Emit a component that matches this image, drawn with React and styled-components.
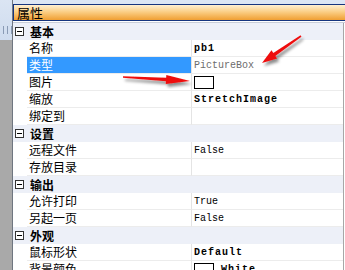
import React from "react";
import styled, { createGlobalStyle } from "styled-components";

const Global = createGlobalStyle`
  html, body {
    margin: 0;
    padding: 0;
    background: #ffffff;
  }
`;

const Page = styled.div`
  position: relative;
  display: flex;
  width: 345px;
  height: 270px;
  overflow: hidden;
  background: #ffffff;
  font-family: "Noto Sans CJK SC", "Noto Sans", sans-serif;
  font-size: 12px;
  color: #000;
`;

const LeftStrip = styled.div`
  position: relative;
  width: 12px;
  flex: none;
  background: linear-gradient(
    to bottom,
    #dbe5f3 0,
    #cfdcef 40px,
    #a9a9a9 40px,
    #a9a9a9 100%
  );
  border-right: 1px solid #6f7680;
`;

const Ticks = styled.div`
  margin-top: 26px;
  height: 8px;
  background: repeating-linear-gradient(
    to right,
    transparent 0,
    transparent 3px,
    #8a9bb5 3px,
    #8a9bb5 4px
  );
`;

const Main = styled.div`
  flex: 1;
  display: flex;
  flex-direction: column;
  min-width: 0;
`;

const TopBand = styled.div`
  flex: none;
  height: 4px;
  background: #dce6f4;
`;

const Header = styled.div`
  flex: none;
  height: 15px;
  line-height: 15px;
  padding-left: 3px;
  border-top: 1px solid #16357f;
  border-bottom: 1px solid #16357f;
  border-left: 1px solid #16357f;
  background: linear-gradient(to bottom, #fff0d2 0%, #fbcf86 45%, #f09f32 100%);
  font-size: 13px;
`;

const Gap = styled.div`
  flex: none;
  height: 1px;
  background: #ffffff;
  border-bottom: 1px solid #c9ced8;
`;

const Grid = styled.div`
  flex: 1;
  min-height: 0;
  overflow: hidden;
  margin-right: 1px;
  border-right: 1px solid #a7a7a7;
  background: #ffffff;
`;

const CategoryRow = styled.div`
  display: flex;
  align-items: center;
  height: 16px;
  border-bottom: 1px solid #edf0f7;
  background: #edf0f8;
  font-weight: bold;
`;

const Toggle = styled.span`
  position: relative;
  width: 7px;
  height: 7px;
  margin: 0 6px 0 2px;
  border: 1px solid #333;
  background: #fff;
  &::after {
    content: "";
    position: absolute;
    left: 1px;
    right: 1px;
    top: 3px;
    height: 1px;
    background: #000;
  }
`;

const PropRow = styled.div`
  display: grid;
  grid-template-columns: 14px 165px 1fr;
  height: 17px;
`;

const Gutter = styled.div`
  background: #ffffff;
`;

const Name = styled.div`
  height: 16px;
  line-height: 16px;
  padding-left: 2px;
  border-bottom: 1px solid #ececec;
  border-right: 1px solid #e4e4e4;
  background: ${(p) => (p.$selected ? "#3399ff" : "#ffffff")};
  color: ${(p) => (p.$selected ? "#ffffff" : "#000000")};
  white-space: nowrap;
`;

const Value = styled.div`
  display: flex;
  align-items: center;
  gap: 7px;
  height: 16px;
  padding-left: 2px;
  border-bottom: 1px solid #ececec;
  font-family: "Liberation Mono", "DejaVu Sans Mono", monospace;
  font-size: 10px;
  font-weight: ${(p) => (p.$bold ? "bold" : "normal")};
  letter-spacing: ${(p) => (p.$bold ? "1px" : "0")};
  color: ${(p) => (p.$gray ? "#6d6d6d" : "#000000")};
  white-space: nowrap;
`;

const Swatch = styled.span`
  width: 18px;
  height: 11px;
  border: 1px solid #000;
  background: #fff;
  flex: none;
`;

const Arrows = styled.svg`
  position: absolute;
  left: 0;
  top: 0;
  pointer-events: none;
`;

const sections = [
  {
    title: "基本",
    items: [
      { name: "名称", value: "pb1", bold: true },
      { name: "类型", value: "PictureBox", gray: true, selected: true },
      { name: "图片", swatch: true },
      { name: "缩放", value: "StretchImage", bold: true },
      { name: "绑定到" },
    ],
  },
  {
    title: "设置",
    items: [{ name: "远程文件", value: "False" }, { name: "存放目录" }],
  },
  {
    title: "输出",
    items: [
      { name: "允许打印", value: "True" },
      { name: "另起一页", value: "False" },
    ],
  },
  {
    title: "外观",
    items: [
      { name: "鼠标形状", value: "Default", bold: true },
      { name: "背景颜色", value: "White", bold: true, swatch: true },
    ],
  },
];

function Arrow({ tail, tip, head, width }) {
  const dx = tip[0] - tail[0];
  const dy = tip[1] - tail[1];
  const len = Math.hypot(dx, dy);
  const ux = dx / len;
  const uy = dy / len;
  const nx = -uy;
  const ny = ux;
  const bx = tip[0] - ux * head;
  const by = tip[1] - uy * head;
  const pts = [
    [tail[0] + nx * 0.8, tail[1] + ny * 0.8],
    [bx + nx * 1.8, by + ny * 1.8],
    [bx + nx * width, by + ny * width],
    tip,
    [bx - nx * width, by - ny * width],
    [bx - nx * 1.8, by - ny * 1.8],
    [tail[0] - nx * 0.8, tail[1] - ny * 0.8],
  ];
  return (
    <polygon
      points={pts.map((p) => p.join(",")).join(" ")}
      fill="#ee1111"
      filter="url(#shadow)"
    />
  );
}

export default function App() {
  return (
    <Page>
      <Global />
      <LeftStrip>
        <Ticks />
      </LeftStrip>
      <Main>
        <TopBand />
        <Header>属性</Header>
        <Gap />
        <Grid>
          {sections.map((s) => (
            <React.Fragment key={s.title}>
              <CategoryRow>
                <Toggle />
                {s.title}
              </CategoryRow>
              {s.items.map((it) => (
                <PropRow key={it.name}>
                  <Gutter />
                  <Name $selected={it.selected}>{it.name}</Name>
                  <Value $bold={it.bold} $gray={it.gray}>
                    {it.swatch && <Swatch />}
                    {it.value}
                  </Value>
                </PropRow>
              ))}
            </React.Fragment>
          ))}
        </Grid>
      </Main>
      <Arrows width="345" height="270" viewBox="0 0 345 270">
        <defs>
          <filter id="shadow" x="-20%" y="-50%" width="140%" height="200%">
            <feDropShadow dx="2" dy="3" stdDeviation="1.5" floodColor="#000" floodOpacity="0.45" />
          </filter>
        </defs>
        <Arrow tail={[301, 36]} tip={[262, 63]} head={15} width={5} />
        <Arrow tail={[123, 77]} tip={[190, 81]} head={24} width={4.5} />
      </Arrows>
    </Page>
  );
}
